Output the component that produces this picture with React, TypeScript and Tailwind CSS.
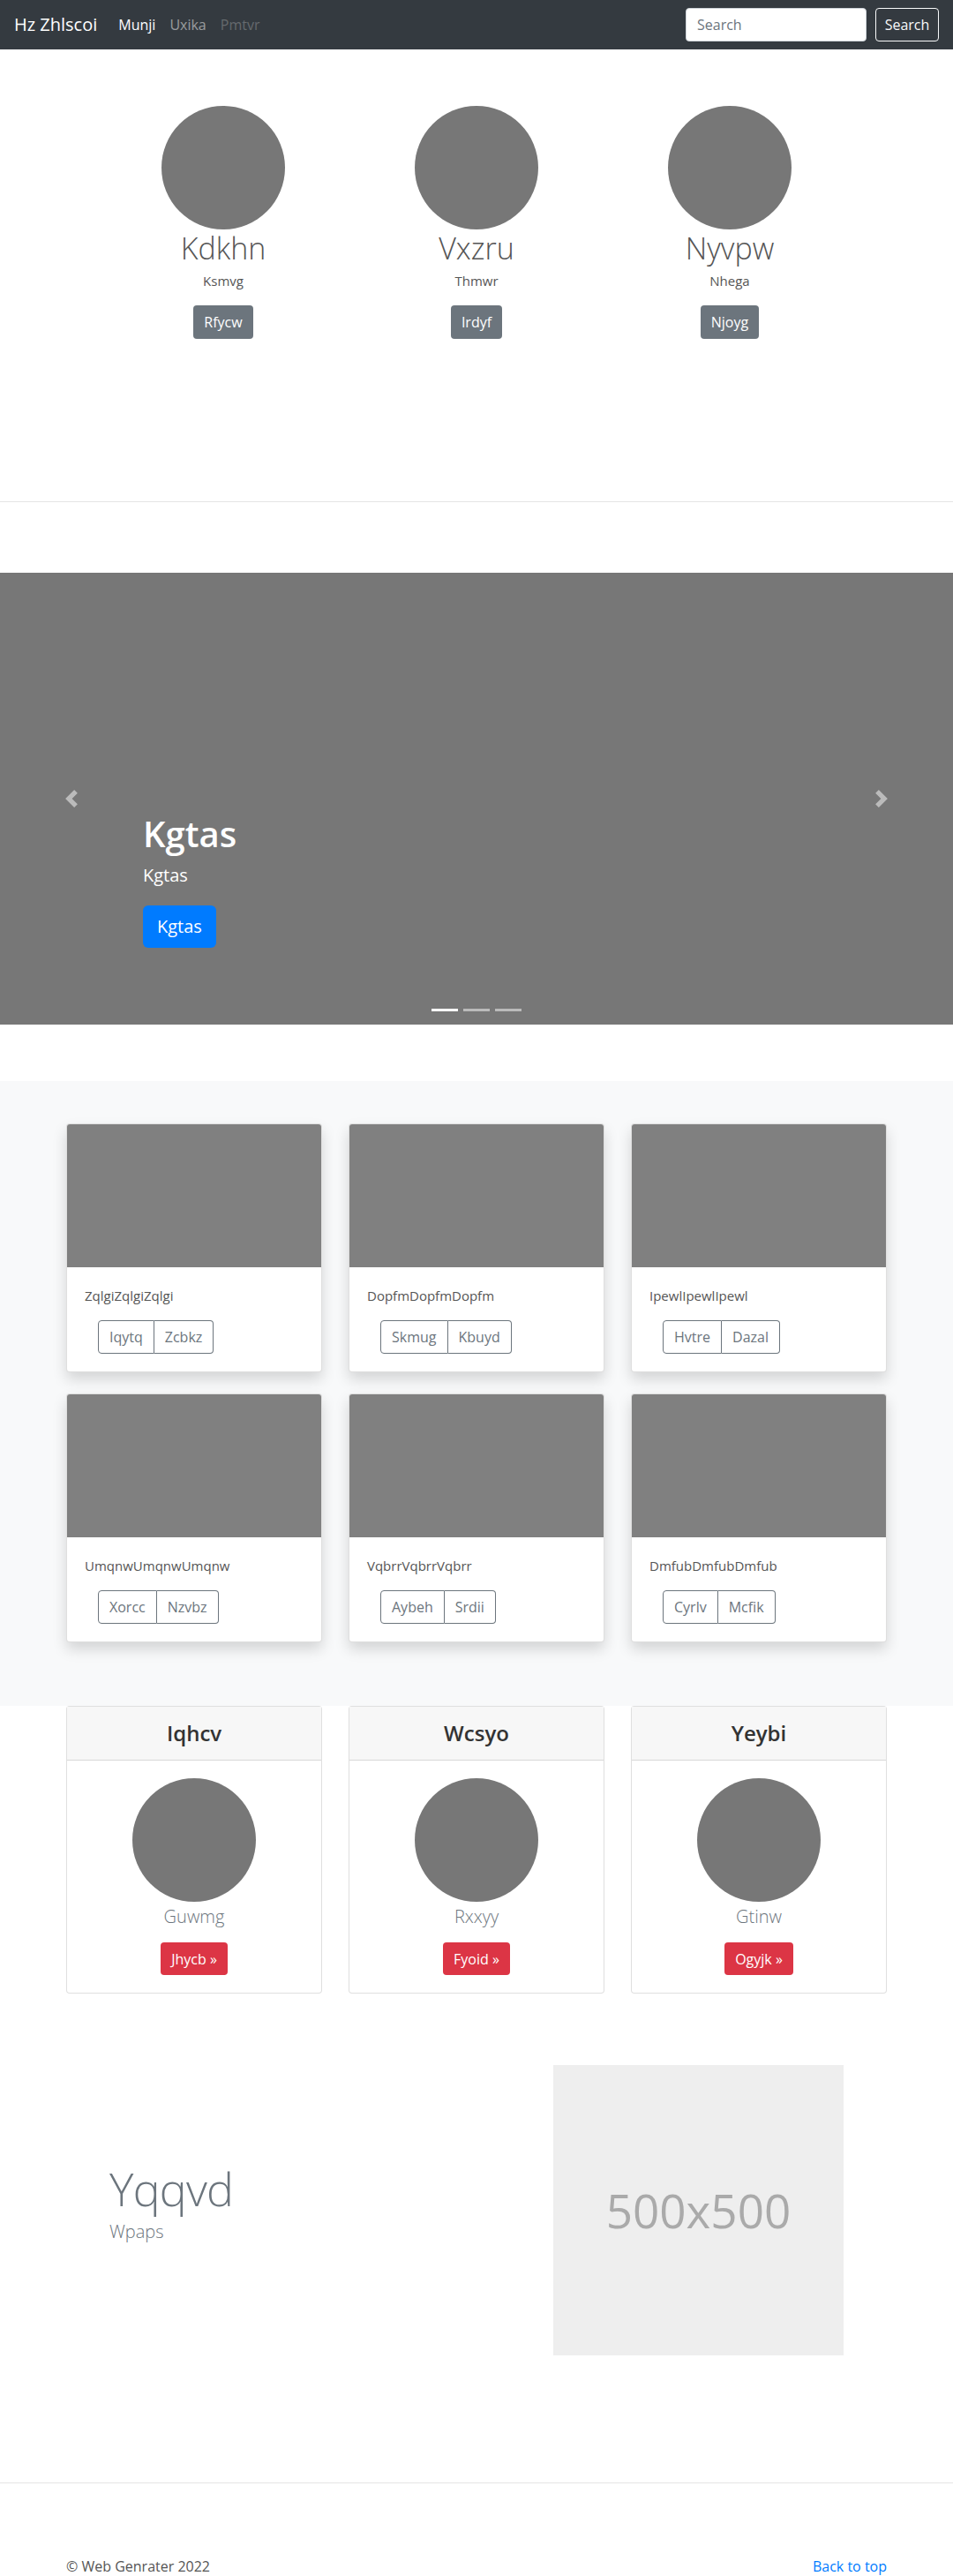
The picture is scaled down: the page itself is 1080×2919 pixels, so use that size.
import React from "react";

const FONT = { fontFamily: '"Open Sans", "Noto Sans", Arial, sans-serif' };

const marketing = [
  { name: "Kdkhn", sub: "Ksmvg", btn: "Rfycw" },
  { name: "Vxzru", sub: "Thmwr", btn: "Irdyf" },
  { name: "Nyvpw", sub: "Nhega", btn: "Njoyg" },
];

const album = [
  { text: "ZqlgiZqlgiZqlgi", a: "Iqytq", b: "Zcbkz" },
  { text: "DopfmDopfmDopfm", a: "Skmug", b: "Kbuyd" },
  { text: "IpewlIpewlIpewl", a: "Hvtre", b: "Dazal" },
  { text: "UmqnwUmqnwUmqnw", a: "Xorcc", b: "Nzvbz" },
  { text: "VqbrrVqbrrVqbrr", a: "Aybeh", b: "Srdii" },
  { text: "DmfubDmfubDmfub", a: "Cyrlv", b: "Mcfik" },
];

const pricing = [
  { title: "Iqhcv", name: "Guwmg", btn: "Jhycb »" },
  { title: "Wcsyo", name: "Rxxyy", btn: "Fyoid »" },
  { title: "Yeybi", name: "Gtinw", btn: "Ogyjk »" },
];

export default function App() {
  return (
    <div style={FONT} className="w-[1080px] bg-white text-[#212529]">
      {/* Navbar */}
      <nav className="h-14 bg-[#343a40] flex items-center px-4">
        <span className="text-white text-[20px] leading-[30px] mr-4">Hz Zhlscoi</span>
        <ul className="flex text-base">
          <li className="px-2 text-white">Munji</li>
          <li className="px-2 text-white/50">Uxika</li>
          <li className="px-2 text-white/25">Pmtvr</li>
        </ul>
        <div className="ml-auto flex items-center gap-[10px]">
          <input
            placeholder="Search"
            className="w-[205px] h-[38px] rounded bg-white border border-[#ced4da] px-3 text-base text-[#495057] placeholder:text-[#6c757d] outline-none"
          />
          <button className="w-[72px] h-[38px] border border-[#f8f9fa] text-[#f8f9fa] rounded text-base">
            Search
          </button>
        </div>
      </nav>

      {/* Marketing */}
      <section className="pt-16">
        <div className="w-[861px] mx-auto grid grid-cols-3">
          {marketing.map((m) => (
            <div key={m.name} className="flex flex-col items-center">
              <div className="w-[140px] h-[140px] rounded-full bg-[#777]" />
              <h2 className="text-[34px] leading-[42px] font-light text-[#555]">{m.name}</h2>
              <p className="mt-[5px] text-[15px] leading-[22px] text-[#555]">{m.sub}</p>
              <button className="mt-[17px] h-[38px] px-3 rounded bg-[#6c757d] text-white text-base">
                {m.btn}
              </button>
            </div>
          ))}
        </div>
        <div className="h-[184px]" />
        <hr className="border-0 border-t border-[#e5e5e5]" />
      </section>

      {/* Carousel */}
      <section className="mt-20 relative h-[512px] bg-[#777] overflow-hidden">
        <div className="absolute left-0 top-0 bottom-0 w-[162px] flex items-center justify-center">
          <svg width="20" height="20" viewBox="0 0 8 8" className="opacity-50">
            <path fill="#fff" d="M5.25 0l-4 4 4 4 1.5-1.5L4.25 4l2.5-2.5L5.25 0z" />
          </svg>
        </div>
        <div className="absolute right-0 top-0 bottom-0 w-[162px] flex items-center justify-center">
          <svg width="20" height="20" viewBox="0 0 8 8" className="opacity-50">
            <path fill="#fff" d="M2.75 0l-1.5 1.5L3.75 4l-2.5 2.5L2.75 8l4-4-4-4z" />
          </svg>
        </div>
        <div className="absolute left-[162px] bottom-[87px] text-white">
          <h1 className="text-[40px] leading-[48px] font-semibold mb-2">Kgtas</h1>
          <p className="text-[20px] leading-[30px] mb-[19px]">Kgtas</p>
          <button className="h-[48px] px-4 rounded-md bg-[#007bff] text-white text-[20px]">Kgtas</button>
        </div>
        <div className="absolute bottom-[15px] left-0 right-0 flex justify-center gap-[6px]">
          <span className="w-[30px] h-[3px] bg-white" />
          <span className="w-[30px] h-[3px] bg-white/50" />
          <span className="w-[30px] h-[3px] bg-white/50" />
        </div>
      </section>

      {/* Album */}
      <section className="mt-16 bg-[#f8f9fa] pt-12 pb-[72px]">
        <div className="w-[960px] mx-auto px-[15px] grid grid-cols-3 gap-x-[30px] gap-y-6">
          {album.map((c) => (
            <div
              key={c.text}
              className="bg-white border border-black/[0.125] rounded shadow-[0_8px_16px_rgba(0,0,0,0.15)] overflow-hidden"
            >
              <div className="h-[162px] bg-[#808080]" />
              <div className="p-5">
                <p className="text-[15px] leading-6 text-[#555] mb-4">{c.text}</p>
                <div className="ml-[15px] inline-flex">
                  <button className="h-[38px] px-3 border border-[#6c757d] text-[#6c757d] rounded-l text-base">
                    {c.a}
                  </button>
                  <button className="h-[38px] px-3 border border-l-0 border-[#6c757d] text-[#6c757d] rounded-r text-base">
                    {c.b}
                  </button>
                </div>
              </div>
            </div>
          ))}
        </div>
      </section>

      {/* Pricing */}
      <section>
        <div className="w-[960px] mx-auto px-[15px] grid grid-cols-3 gap-x-[30px]">
          {pricing.map((p) => (
            <div key={p.title} className="border border-black/[0.125] rounded bg-white">
              <div className="h-[61px] bg-[#f7f7f7] border-b border-black/[0.125] flex items-center justify-center text-[24px] font-semibold text-[#333]">
                {p.title}
              </div>
              <div className="py-5 flex flex-col items-center">
                <div className="w-[140px] h-[140px] rounded-full bg-[#777]" />
                <p className="mt-[2px] text-[20px] leading-[30px] font-light text-[#6c757d]">{p.name}</p>
                <button className="mt-[14px] h-[37px] px-3 rounded bg-[#dc3545] text-white text-base">
                  {p.btn}
                </button>
              </div>
            </div>
          ))}
        </div>
      </section>

      {/* Featurette */}
      <section className="mt-[81px]">
        <div className="w-[960px] mx-auto px-16 flex items-center justify-between">
          <div className="pb-3">
            <h2 className="text-[52px] leading-none font-light tracking-[-0.8px] text-[#6c757d]">Yqqvd</h2>
            <p className="mt-2 text-[20px] leading-[30px] font-light text-[#6c757d]">Wpaps</p>
          </div>
          <div className="w-[329px] h-[329px] bg-[#eee] flex items-center justify-center">
            <span className="text-[53px] text-[#aaa]">500x500</span>
          </div>
        </div>
      </section>

      <hr className="mt-[144px] border-0 border-t border-[#e5e5e5]" />

      {/* Footer */}
      <footer className="w-[960px] mx-auto px-[15px] pt-[84px] flex justify-between text-base leading-5">
        <span className="text-[#555]">© Web Genrater 2022</span>
        <span className="text-[#007bff]">Back to top</span>
      </footer>
    </div>
  );
}
